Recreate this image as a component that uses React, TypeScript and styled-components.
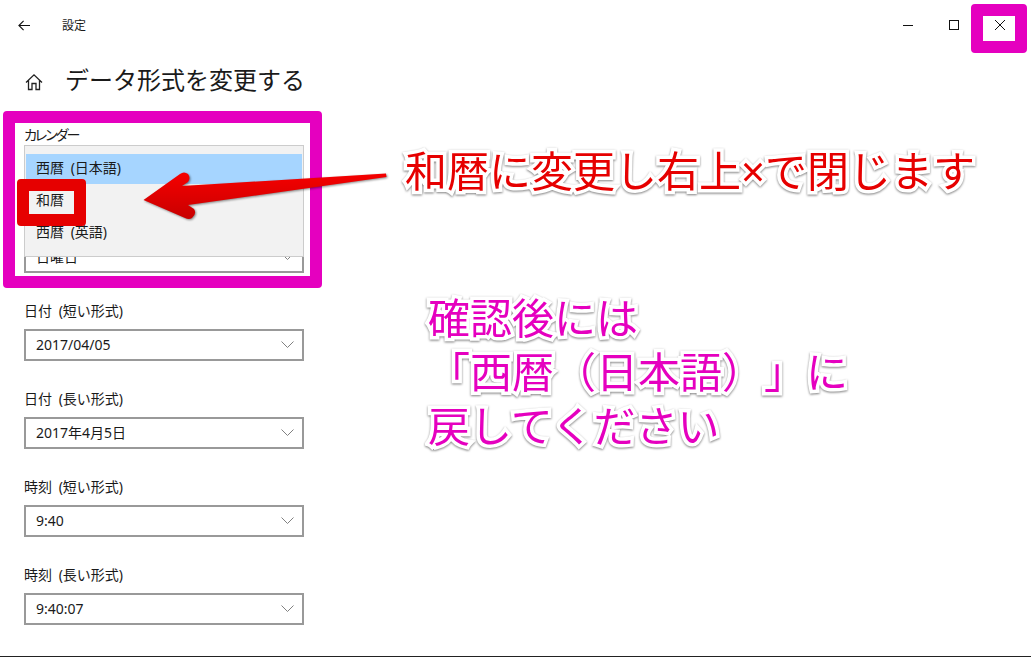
import React from 'react'
import styled, { createGlobalStyle } from 'styled-components'

const FONT = `"Noto Sans", "Noto Sans CJK JP", sans-serif`
const MAGENTA = '#e500bf'
const RED = '#e60000'

const fields = [
  { label: '日付 (短い形式)', value: '2017/04/05' },
  { label: '日付 (長い形式)', value: '2017年4月5日' },
  { label: '時刻 (短い形式)', value: '9:40' },
  { label: '時刻 (長い形式)', value: '9:40:07' },
]

const calendarOptions = ['西暦 (日本語)', '和暦', '西暦 (英語)']

const Chevron = () => (
  <svg width="13" height="7" viewBox="0 0 13 7" fill="none" stroke="#808080" strokeWidth="1">
    <path d="M0.5 0.5 L6.5 6.5 L12.5 0.5" />
  </svg>
)

const App = () => {
  return (
    <Page>
      <GlobalStyle />
      <TitleBar>
        <BackButton>
          <svg width="12" height="11" viewBox="0 0 12 11" fill="none" stroke="#111" strokeWidth="1.1">
            <path d="M12 5.5 H1 M5.6 0.8 L0.9 5.5 L5.6 10.2" />
          </svg>
        </BackButton>
        <AppName>設定</AppName>
        <WindowButtons>
          <WindowButton>
            <svg width="10" height="10" viewBox="0 0 10 10" stroke="#111" strokeWidth="1">
              <path d="M0 5.5 H10" />
            </svg>
          </WindowButton>
          <WindowButton>
            <svg width="10" height="10" viewBox="0 0 10 10" fill="none" stroke="#111" strokeWidth="1">
              <rect x="0.5" y="0.5" width="9" height="9" />
            </svg>
          </WindowButton>
          <WindowButton>
            <svg width="10" height="10" viewBox="0 0 10 10" stroke="#111" strokeWidth="1">
              <path d="M0 0 L10 10 M10 0 L0 10" />
            </svg>
          </WindowButton>
        </WindowButtons>
      </TitleBar>

      <Heading>
        <HomeIcon>
          <svg width="18" height="18" viewBox="0 0 18 18" fill="none" stroke="#222" strokeWidth="1.3">
            <path d="M1 9.5 L9 1.8 L17 9.5 M3.5 7.5 V16.5 H7 V10.5 H11 V16.5 H14.5 V7.5" />
          </svg>
        </HomeIcon>
        <Title>データ形式を変更する</Title>
      </Heading>

      <Form>
        <Field>
          <KanaLabel>カレンダー</KanaLabel>
          <Select />
          <Popup>
            {calendarOptions.map((option, i) => (
              <PopupRow key={option} $selected={i === 0}>
                {option}
              </PopupRow>
            ))}
          </Popup>
        </Field>
        <Field>
          <Label />
          <Select>
            <span>日曜日</span>
            <Chevron />
          </Select>
        </Field>
        {fields.map((field) => (
          <Field key={field.label}>
            <Label>{field.label}</Label>
            <Select>
              <span>{field.value}</span>
              <Chevron />
            </Select>
          </Field>
        ))}
      </Form>

      <CalendarFrame />
      <CloseFrame />
      <OptionFrame />
      <Arrow width="260" height="60" viewBox="135 165 260 60">
        <defs>
          <linearGradient id="arrowFill" x1="0" y1="0" x2="0" y2="1">
            <stop offset="0" stopColor="#f60000" />
            <stop offset="1" stopColor="#c80000" />
          </linearGradient>
        </defs>
        <path
          d="M386 173.5 L386.5 177 L188 205 L194 209 Q197 214 192 218 Q189 220 185 218 L143.5 200 L180 174 Q184 171 188 174 Q191 178 188 182 L182 186 Z"
          fill="url(#arrowFill)"
        />
      </Arrow>

      <RedNote>和暦に変更し右上×で閉じます</RedNote>
      <PinkNote>
        確認後には
        <br />
        「西暦（日本語）」に
        <br />
        戻してください
      </PinkNote>
    </Page>
  )
}

export default App

const GlobalStyle = createGlobalStyle`
  html, body {
    margin: 0;
    padding: 0;
    background: #fff;
  }
`

const Page = styled.div`
  position: relative;
  box-sizing: border-box;
  width: 1031px;
  height: 657px;
  overflow: hidden;
  background: #fff;
  border-bottom: 1px solid #222;
  font-family: ${FONT};
  color: #1a1a1a;
`

const TitleBar = styled.div`
  display: flex;
  align-items: center;
  height: 50px;
`

const BackButton = styled.div`
  display: flex;
  align-items: center;
  justify-content: center;
  width: 48px;
  height: 50px;
`

const AppName = styled.div`
  margin-left: 14px;
  padding-top: 1px;
  font-size: 12px;
  line-height: 49px;
`

const WindowButtons = styled.div`
  display: flex;
  margin-left: auto;
  padding-right: 8px;
`

const WindowButton = styled.div`
  display: flex;
  align-items: center;
  justify-content: center;
  width: 46px;
  height: 50px;
`

const Heading = styled.div`
  display: flex;
  align-items: center;
  height: 60px;
`

const HomeIcon = styled.div`
  display: flex;
  justify-content: center;
  width: 68px;
  margin-right: -3px;
  padding-top: 3px;
`

const Title = styled.h1`
  margin: 0;
  font-size: 24px;
  font-weight: 400;
  line-height: 60px;
`

const Form = styled.div`
  display: flex;
  flex-direction: column;
  gap: 27px;
  margin-top: 14px;
  padding-left: 24px;
`

const Field = styled.div`
  position: relative;
  width: 280px;
`

const Label = styled.div`
  height: 22px;
  margin-bottom: 7px;
  font-size: 14px;
  line-height: 22px;
  word-spacing: 3px;
  white-space: nowrap;
`

const KanaLabel = styled(Label)`
  font-feature-settings: 'palt';
  letter-spacing: -2px;
`

const Select = styled.div`
  display: flex;
  align-items: center;
  justify-content: space-between;
  box-sizing: border-box;
  height: 32px;
  padding: 0 8px 2px 10px;
  border: 2px solid #999;
  background: #fff;
  font-size: 14px;
`

const Popup = styled.div`
  position: absolute;
  top: 21px;
  left: 0;
  z-index: 2;
  display: flex;
  flex-direction: column;
  gap: 2px;
  box-sizing: border-box;
  width: 280px;
  height: 112px;
  padding: 8px 1px;
  border: 1px solid #ccc;
  background: #f2f2f2;
`

const PopupRow = styled.div<{ $selected: boolean }>`
  height: 30px;
  padding-left: 10px;
  background: ${(p) => (p.$selected ? '#a6d5ff' : 'transparent')};
  font-size: 14px;
  line-height: 28px;
  word-spacing: 3px;
`

const Frame = styled.div`
  position: absolute;
  z-index: 3;
  box-sizing: border-box;
  border-radius: 4px;
  border-style: solid;
  border-width: 12px;
`

const CalendarFrame = styled(Frame)`
  top: 111px;
  left: 3px;
  width: 319px;
  height: 177px;
  border-color: ${MAGENTA};
`

const CloseFrame = styled(Frame)`
  top: 4px;
  left: 971px;
  width: 56px;
  height: 49px;
  border-color: ${MAGENTA};
`

const OptionFrame = styled(Frame)`
  top: 179px;
  left: 17px;
  width: 69px;
  height: 47px;
  border-color: ${RED};
`

const Arrow = styled.svg`
  position: absolute;
  top: 165px;
  left: 135px;
  z-index: 4;
  overflow: visible;
  filter: drop-shadow(1px 1px 1px rgba(0, 0, 0, 0.45));
`

const Note = styled.div`
  position: absolute;
  z-index: 5;
  font-weight: 400;
  white-space: nowrap;
  text-spacing-trim: space-all;
  -webkit-text-stroke: 7px #fff;
  paint-order: stroke fill;
  filter: drop-shadow(0 1px 1px rgba(0, 0, 0, 0.5));
`

const RedNote = styled(Note)`
  top: 146px;
  left: 405px;
  font-size: 42px;
  line-height: 50px;
  color: ${RED};
`

const PinkNote = styled(Note)`
  top: 291px;
  left: 428px;
  font-size: 42px;
  line-height: 54px;
  color: ${MAGENTA};
`
